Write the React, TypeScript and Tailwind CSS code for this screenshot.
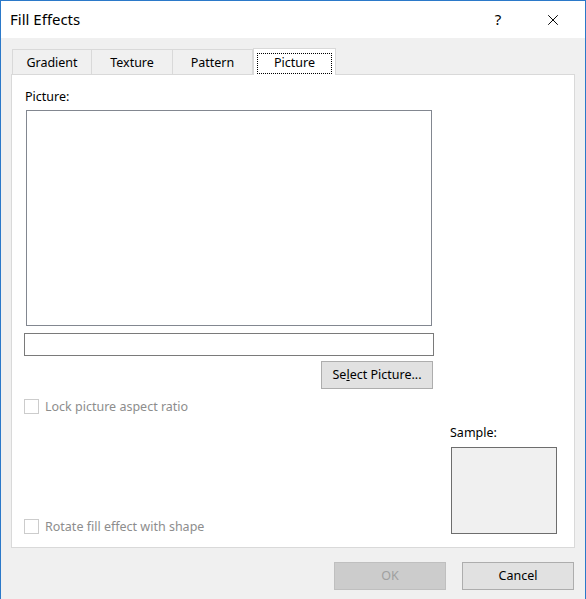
import { X } from "lucide-react";

const font = { fontFamily: '"Noto Sans", "Open Sans", sans-serif' };

function Tab({ label, active, w }: { label: string; active?: boolean; w: string }) {
  if (active) {
    return (
      <div className={`${w} h-[27px] -mb-px bg-white border border-b-0 border-[#d9d9d9] flex items-center justify-center relative z-10 px-[3px] pt-[2px]`}>
        <div className="w-full h-[21px] border border-dotted border-black flex items-center justify-center text-[12.5px] text-black">
          {label}
        </div>
      </div>
    );
  }
  return (
    <div className={`${w} h-[25px] bg-[#f0f0f0] border border-b-0 border-[#d9d9d9] -ml-px first:ml-0 flex items-center justify-center text-[12.5px] text-black pt-[2px]`}>
      {label}
    </div>
  );
}

function Checkbox({ label }: { label: string }) {
  return (
    <div className="flex items-center h-[15px] gap-[6px] -ml-px">
      <div className="w-[15px] h-[15px] shrink-0 border border-[#cccccc] bg-white" />
      <span className="text-[12.5px] leading-[15px] text-[#8d8d8d]">{label}</span>
    </div>
  );
}

export default function App() {
  return (
    <div style={font} className="w-[586px] h-[599px] flex flex-col border-x border-t border-[#2b79c9] bg-[#f0f0f0] overflow-hidden">
      {/* Title bar */}
      <div className="h-[37px] bg-white flex items-center shrink-0">
        <span className="pl-[9px] text-[15px] text-black flex-1">Fill Effects</span>
        <span className="text-[15px] text-black w-[46px] text-center">?</span>
        <div className="w-[64px] flex justify-center">
          <X className="w-[18px] h-[18px] text-black" strokeWidth={1.3} />
        </div>
      </div>

      <div className="flex-1 flex flex-col px-[10px] pt-[10px]">
        {/* Tabs */}
        <div className="flex items-end h-[26px] pl-[1px]">
          <Tab label="Gradient" w="w-[80px]" />
          <Tab label="Texture" w="w-[82px]" />
          <Tab label="Pattern" w="w-[81px]" />
          <Tab label="Picture" w="w-[83px]" active />
        </div>

        {/* Panel */}
        <div className="h-[474px] bg-white border border-[#d9d9d9] flex flex-col pt-[14px] pl-[13px] pr-[17px] pb-[13px]">
          <div className="text-[12.5px] text-black leading-[16px]">Picture:</div>
          <div className="mt-[5px] ml-[1px] w-[406px] h-[216px] border border-[#828790] bg-white" />
          <div className="mt-[7px] -ml-px w-[410px] h-[23px] border border-[#7a7a7a] bg-white" />
          <div className="w-[410px] -ml-px flex justify-end mt-[5px]">
            <button className="mr-[1px] w-[112px] h-[28px] bg-[#e1e1e1] border border-[#adadad] text-[12.5px] text-black">
              Se<span className="underline">l</span>ect Picture...
            </button>
          </div>
          <div className="mt-[10px]">
            <Checkbox label="Lock picture aspect ratio" />
          </div>
          <div className="mt-auto flex items-end justify-between">
            <Checkbox label="Rotate fill effect with shape" />
            <div className="flex flex-col">
              <div className="text-[12.5px] text-black leading-[16px] -ml-px">Sample:</div>
              <div className="mt-[6px] w-[106px] h-[87px] border border-[#6d6d6d] bg-[#f0f0f0]" />
            </div>
          </div>
        </div>

        {/* Footer buttons */}
        <div className="flex justify-end gap-[16px] mt-[14px] pr-px">
          <button className="w-[112px] h-[28px] bg-[#cccccc] border border-[#bfbfbf] text-[12.5px] text-[#a0a0a0]">
            OK
          </button>
          <button className="w-[112px] h-[28px] bg-[#e1e1e1] border border-[#adadad] text-[12.5px] text-black">
            Cancel
          </button>
        </div>
      </div>
    </div>
  );
}
